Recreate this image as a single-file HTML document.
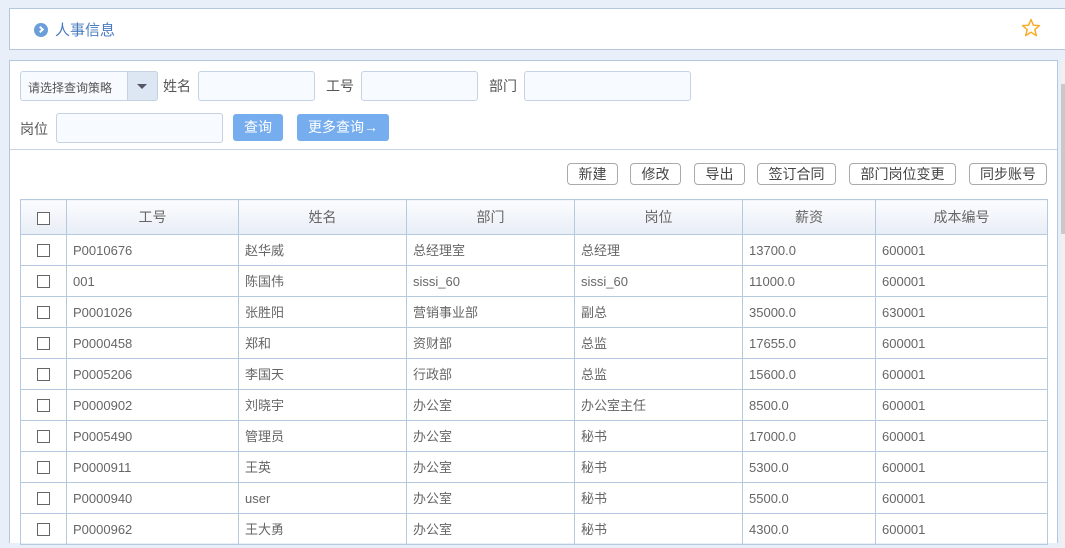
<!DOCTYPE html>
<html><head><meta charset="utf-8"><style>
*{box-sizing:border-box;margin:0;padding:0}
body{width:1065px;height:548px;overflow:hidden;background:#e9eff9;font-family:"Liberation Sans","Noto Sans CJK SC",sans-serif;font-size:13px;color:#555;position:relative}
.abs{position:absolute}
.top{left:9px;top:8px;width:1060px;height:42px;background:#fff;border:1px solid #b5c7de}
.main{left:9px;top:60px;width:1049px;height:483px;background:#fff;border:1px solid #b5c7de;border-bottom:none}
.inp{background:#f7fafe;border:1px solid #c4d2e4;border-radius:3px;height:30px}
.lbl{font-size:14px;color:#555}
.btn{background:#76adef;color:#fff;border-radius:3px;font-size:14px;text-align:center;line-height:27px;height:27px}
.obtn{border:1px solid #aaa;border-radius:4px;height:22px;line-height:20px;font-size:14px;text-align:center;color:#444;background:#fff}
table{position:absolute;left:20px;top:199px;border-collapse:collapse;table-layout:fixed}
td,th{border:1px solid #b7c9de;height:31px;line-height:16px;font-weight:normal;font-size:13px;padding:1px 0 0 6px;text-align:left;color:#666}
th{height:35px;text-align:center;font-size:14px;background:linear-gradient(#fbfcfe,#e8eef6);padding:0}
td.c,th.c{text-align:center;padding:0}
.cb{display:inline-block;width:13px;height:13px;border:1px solid #666;vertical-align:middle;background:#fff}
</style></head><body>
<div class="abs top">
 <div class="abs" style="left:24px;top:14px;width:14px;height:14px;border-radius:50%;background:#6a9fd9"></div>
 <div class="abs" style="left:28px;top:18px;width:5px;height:5px;border-right:2px solid #fff;border-bottom:2px solid #fff;transform:rotate(-45deg)"></div>
 <div class="abs" style="left:45px;top:10px;font-size:15px;color:#4a7cc0">人事信息</div>
 <svg class="abs" style="left:1011px;top:9px" width="20" height="20" viewBox="0 0 20 20"><polygon points="10,1.5 12.4,7.2 18.5,7.6 13.8,11.6 15.3,17.6 10,14.3 4.7,17.6 6.2,11.6 1.5,7.6 7.6,7.2" fill="none" stroke="#f5ad2a" stroke-width="1.5" stroke-linejoin="round"/></svg>
</div>
<div class="abs main"></div>
<div class="abs" style="left:1061px;top:60px;width:4px;height:488px;background:#f0f0f0"></div>
<div class="abs" style="left:1061px;top:84px;width:4px;height:150px;background:#c9c9c9"></div>
<div class="abs inp" style="left:20px;top:71px;width:138px;border-radius:3px"></div>
<div class="abs" style="left:28px;top:79px;font-size:12px;color:#555">请选择查询策略</div>
<div class="abs" style="left:127px;top:71px;width:31px;height:30px;background:#dde7f3;border:1px solid #c4d2e4;border-radius:0 3px 3px 0"></div>
<div class="abs" style="left:137px;top:84px;border-left:5px solid transparent;border-right:5px solid transparent;border-top:5px solid #556"></div>
<div class="abs lbl" style="left:163px;top:76px">姓名</div>
<div class="abs inp" style="left:198px;top:71px;width:117px"></div>
<div class="abs lbl" style="left:326px;top:76px">工号</div>
<div class="abs inp" style="left:361px;top:71px;width:117px"></div>
<div class="abs lbl" style="left:489px;top:76px">部门</div>
<div class="abs inp" style="left:524px;top:71px;width:167px"></div>
<div class="abs lbl" style="left:20px;top:119px">岗位</div>
<div class="abs inp" style="left:56px;top:113px;width:167px"></div>
<div class="abs btn" style="left:233px;top:114px;width:50px">查询</div>
<div class="abs btn" style="left:297px;top:114px;width:92px">更多查询→</div>
<div class="abs" style="left:10px;top:149px;width:1047px;height:1px;background:#c9d4e2"></div>
<div class="abs obtn" style="left:567px;top:163px;width:51px">新建</div>
<div class="abs obtn" style="left:630px;top:163px;width:51px">修改</div>
<div class="abs obtn" style="left:694px;top:163px;width:51px">导出</div>
<div class="abs obtn" style="left:757px;top:163px;width:79px">签订合同</div>
<div class="abs obtn" style="left:849px;top:163px;width:107px">部门岗位变更</div>
<div class="abs obtn" style="left:969px;top:163px;width:78px">同步账号</div>
<table>
<colgroup><col style="width:46px"><col style="width:172px"><col style="width:168px"><col style="width:168px"><col style="width:168px"><col style="width:133px"><col style="width:172px"></colgroup>
<tr><th class="c"><span class="cb"></span></th><th>工号</th><th>姓名</th><th>部门</th><th>岗位</th><th>薪资</th><th>成本编号</th></tr>
<tr><td class="c"><span class="cb"></span></td><td>P0010676</td><td>赵华威</td><td>总经理室</td><td>总经理</td><td>13700.0</td><td>600001</td></tr>
<tr><td class="c"><span class="cb"></span></td><td>001</td><td>陈国伟</td><td>sissi_60</td><td>sissi_60</td><td>11000.0</td><td>600001</td></tr>
<tr><td class="c"><span class="cb"></span></td><td>P0001026</td><td>张胜阳</td><td>营销事业部</td><td>副总</td><td>35000.0</td><td>630001</td></tr>
<tr><td class="c"><span class="cb"></span></td><td>P0000458</td><td>郑和</td><td>资财部</td><td>总监</td><td>17655.0</td><td>600001</td></tr>
<tr><td class="c"><span class="cb"></span></td><td>P0005206</td><td>李国天</td><td>行政部</td><td>总监</td><td>15600.0</td><td>600001</td></tr>
<tr><td class="c"><span class="cb"></span></td><td>P0000902</td><td>刘晓宇</td><td>办公室</td><td>办公室主任</td><td>8500.0</td><td>600001</td></tr>
<tr><td class="c"><span class="cb"></span></td><td>P0005490</td><td>管理员</td><td>办公室</td><td>秘书</td><td>17000.0</td><td>600001</td></tr>
<tr><td class="c"><span class="cb"></span></td><td>P0000911</td><td>王英</td><td>办公室</td><td>秘书</td><td>5300.0</td><td>600001</td></tr>
<tr><td class="c"><span class="cb"></span></td><td>P0000940</td><td>user</td><td>办公室</td><td>秘书</td><td>5500.0</td><td>600001</td></tr>
<tr><td class="c"><span class="cb"></span></td><td>P0000962</td><td>王大勇</td><td>办公室</td><td>秘书</td><td>4300.0</td><td>600001</td></tr>
</table>
</body></html>
